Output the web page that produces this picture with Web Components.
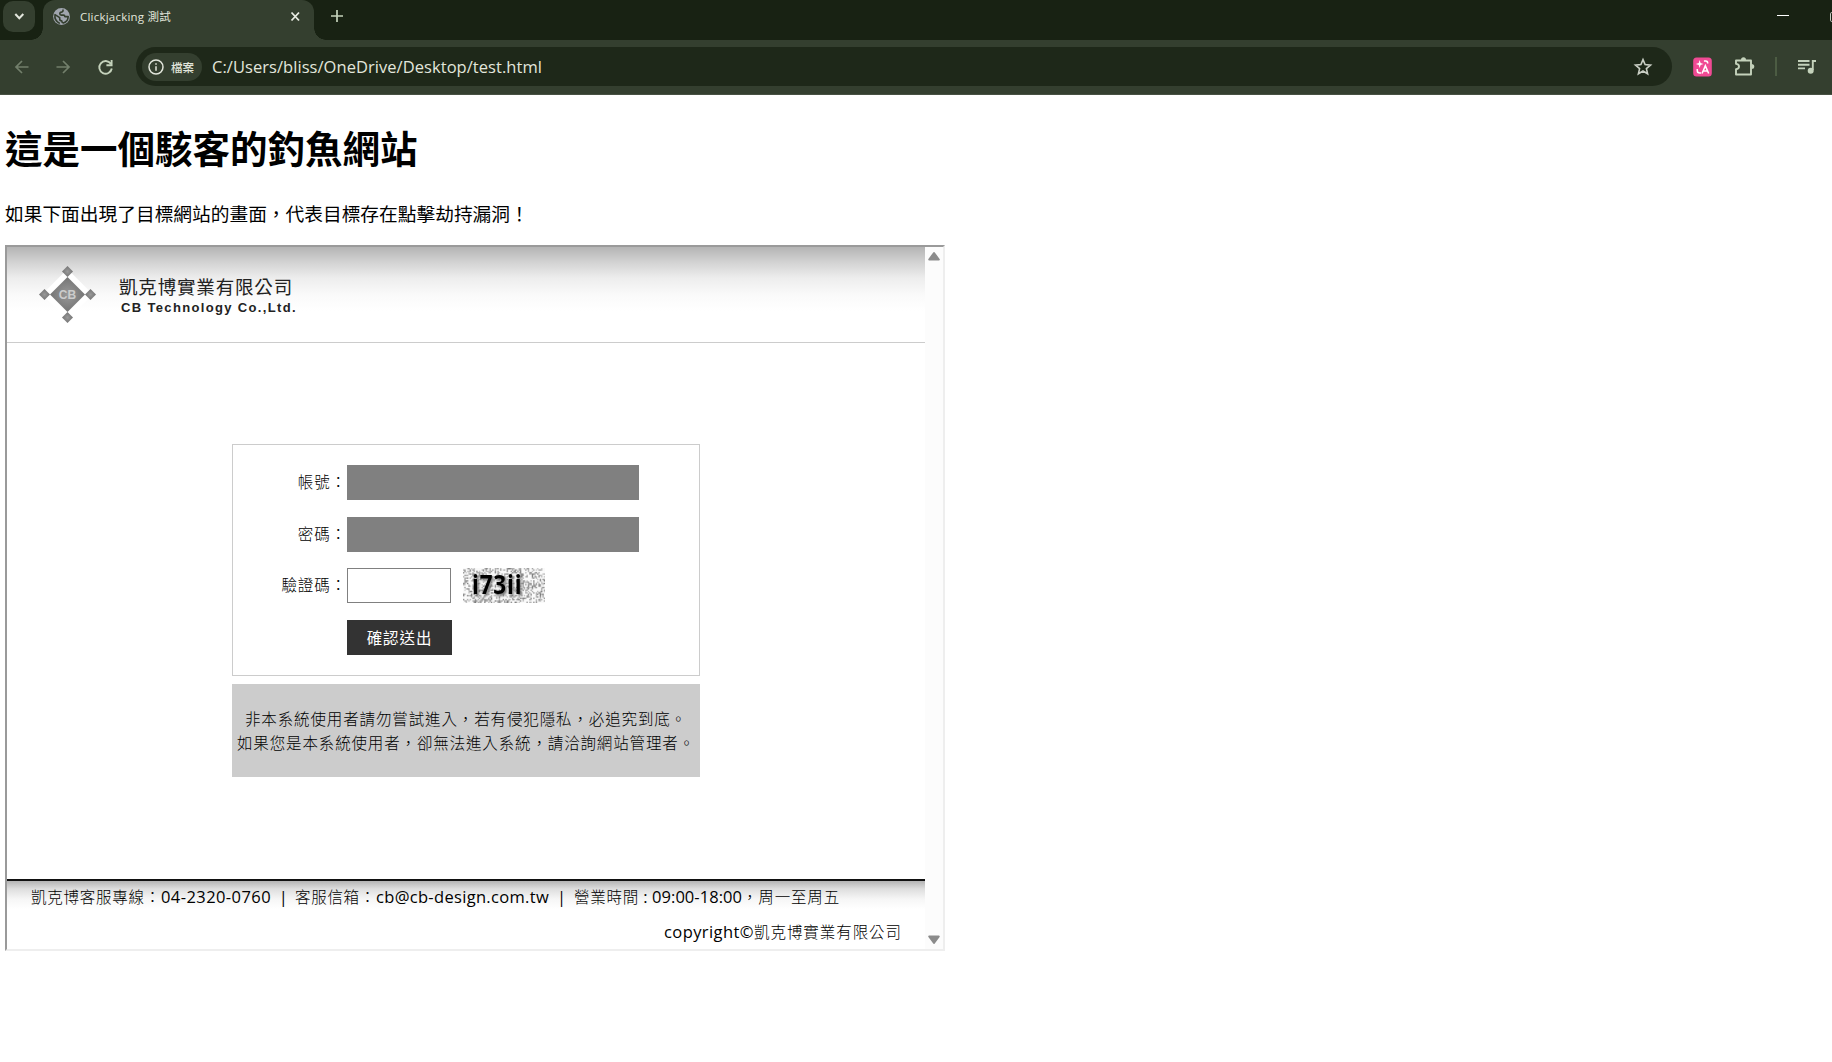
<!DOCTYPE html>
<html lang="zh-Hant">
<head>
<meta charset="utf-8">
<title>Clickjacking 測試</title>
<style>
  body {
    margin: 0;
    background: #fff;
    font-family: 'Open Sans', 'Noto Sans CJK TC', sans-serif;
    overflow: hidden;
  }
</style>
</head>
<body>
<tab-strip><fit-text width="91">Clickjacking 測試</fit-text></tab-strip>
<tool-bar><fit-text width="330">C:/Users/bliss/OneDrive/Desktop/test.html</fit-text></tool-bar>
<test-page>
  <frame-view>
    <site-header></site-header>
    <login-panel></login-panel>
    <site-footer></site-footer>
  </frame-view>
</test-page>

<script>
class BaseElement extends HTMLElement {
  connectedCallback() {
    if (this.shadowRoot) return
    const template = document.createElement('template')
    template.innerHTML = this.content()
    this.attachShadow({ mode: 'open' })
    this.shadowRoot.append(template.content.cloneNode(true))
    this.render()
  }

  render() {}
}

// one line of text, tracked so that it fills the given width
class FitText extends BaseElement {
  content() {
    return `
      <style>
        :host { display: block; flex: none; }
        span { display: inline-block; white-space: pre; vertical-align: top; }
      </style>
      <span><slot></slot></span>
    `
  }

  render() {
    const width = Number(this.getAttribute('width'))
    const span = this.shadowRoot.querySelector('span')
    const count = [...this.textContent].length
    const natural = span.getBoundingClientRect().width
    span.style.letterSpacing = (width - natural) / count + 'px'
    this.style.width = width + 'px'
  }
}

class TabStrip extends BaseElement {
  content() {
    return `
      <style>
        :host {
          display: flex;
          height: 40px;
          background: #182213;
          color: #e2e6dc;
          font-size: 11.500px;
          line-height: 32px;
        }
        .search {
          width: 32px;
          height: 31px;
          margin: 1px 0 0 3px;
          border-radius: 10px;
          background: #343f2f;
        }
        .tab {
          position: relative;
          display: flex;
          align-items: center;
          box-sizing: border-box;
          width: 271px;
          height: 40px;
          margin-left: 8px;
          padding: 0 12px 7px 10px;
          border-radius: 12px 12px 0 0;
          background: #343f2f;
        }
        .tab::before,
        .tab::after {
          content: '';
          position: absolute;
          bottom: 0;
          width: 12px;
          height: 12px;
        }
        .tab::before { left: -12px; background: radial-gradient(circle at 0 0, transparent 11.5px, #343f2f 12px); }
        .tab::after { right: -12px; background: radial-gradient(circle at 100% 0, transparent 11.5px, #343f2f 12px); }
        .globe { margin-right: 10px; }
        .close { margin-left: auto; }
        .plus { margin: 8px 0 0 15px; }
        .min { margin: 9px 40px 0 auto; }
        .max { margin-top: 9px; }
        svg { display: block; flex: none; }
      </style>
      <div class="search">
        <svg width="32" height="31" fill="none" stroke="#e2e6dc" stroke-width="2"><path d="M12.300 13l4 4.300 4-4.300"/></svg>
      </div>
      <div class="tab">
        <svg class="globe" width="17" height="17" viewBox="0 0 17 17">
          <circle cx="8.500" cy="8.500" r="8.400" fill="#a0a5ae"/>
          <path d="M10 1.500q.3 2.600-1.500 2.600-1.700 0-1.700 1.700 0 1.300 1.400 1.300h2.300q1.300 0 1.300 1.500h3.400q-.3 5-4.700 6.400-1.800-.4-1.800-2.300-2 0-2-1.800V9.700L2 6.600Q1 12.500 6.800 15.500" fill="none" stroke="#343f2f" stroke-width="1.600" stroke-linejoin="round"/>
        </svg>
        <slot></slot>
        <svg class="close" width="14" height="14" stroke="#e8ece3" stroke-width="1.800"><path d="M3.500 2.500l7.500 8M11 2.500l-7.500 8"/></svg>
      </div>
      <svg class="plus" width="16" height="16" stroke="#c4d2bb" stroke-width="1.700"><path d="M8 2v12M2 8h12"/></svg>
      <svg class="min" width="14" height="14" stroke="#fff"><path d="M1 6.500h12"/></svg>
      <svg class="max" width="2" height="14" fill="none" stroke="#c4c9c0"><path d="M4 3.500H1.800q-1.300 0-1.300 1.300v6.400q0 1.300 1.300 1.300H4"/></svg>
    `
  }
}

class ToolBar extends BaseElement {
  content() {
    return `
      <style>
        :host {
          display: flex;
          align-items: center;
          box-sizing: border-box;
          height: 55px;
          padding: 0 15px 1px 12px;
          background: #343f2f;
          border-bottom: 1px solid #485143;
          color: #e2e6dc;
        }
        svg { display: block; flex: none; }
        .back, .forward { margin-right: 21px; }
        .reload { margin-right: 20px; }
        .address {
          display: flex;
          flex: none;
          align-items: center;
          box-sizing: border-box;
          width: 1536px;
          height: 39px;
          padding: 0 19px 0 6px;
          border-radius: 20px;
          background: #1e2819;
          font-size: 16.500px;
        }
        .chip {
          display: flex;
          align-items: center;
          box-sizing: border-box;
          width: 60px;
          height: 28px;
          margin-right: 10px;
          padding-left: 6px;
          gap: 7px;
          border-radius: 14px;
          background: #343f2f;
          font-size: 11.500px;
          font-weight: 500;
        }
        .star { margin-left: auto; }
        .translate { margin-left: 21px; }
        .puzzle { margin-left: 22px; }
        .bar { width: 2px; height: 19px; margin: 0 21px 0 20px; background: #4c5c43; }
      </style>
      <svg class="back" width="20" height="20" fill="none" stroke="#727f6b" stroke-width="1.700"><path d="M16.500 10H4M10 4l-6 6 6 6"/></svg>
      <svg class="forward" width="20" height="20" fill="none" stroke="#727f6b" stroke-width="1.700"><path d="M3.500 10H16M10 4l6 6-6 6"/></svg>
      <svg class="reload" width="22" height="20" fill="none" stroke="#c4d2bb" stroke-width="1.900"><path d="M16.800 6.800A6.300 6.300 0 1 0 17.800 11.500M17.600 3v5.200h-5.200"/></svg>
      <div class="address">
        <div class="chip">
          <svg width="16" height="16" fill="none" stroke="#e2e6dc" stroke-width="1.500"><circle cx="8" cy="8" r="7"/><path d="M8 7.200v4.500M8 4.200v1.600"/></svg>
          <span>檔案</span>
        </div>
        <slot></slot>
        <svg class="star" width="20" height="20" fill="none" stroke="#c9cec4" stroke-width="1.600"><path d="M10 2.600l2.100 5 5.400.5-4.100 3.500 1.200 5.200-4.600-2.800-4.600 2.800 1.200-5.200L2.500 8.100l5.400-.5z"/></svg>
      </div>
      <svg class="translate" width="19" height="20" viewBox="0 0 20 20" preserveAspectRatio="none">
        <rect x=".2" y=".5" width="19.600" height="19" rx="3.500" fill="#f04a94"/>
        <path d="M7 3l1 3 3 1-3 1-1 3-1-3-3-1 3-1z" fill="#fff"/>
        <path d="M11.500 4h2q2 0 2 2.500M4.500 12v1.500q0 2.500 2.500 2.500h1.500M9.500 16.500L13 8.800l3.500 7.700M10.700 14h4.600" fill="none" stroke="#fff" stroke-width="1.600"/>
      </svg>
      <svg class="puzzle" width="21" height="21" viewBox="0 0 21 21">
        <path d="M17 8v-3.500H2v3.200q3 .3 3 2.800t-3 2.800v5.200h15V8" fill="none" stroke="#c4d2bb" stroke-width="1.900" stroke-linejoin="round"/>
        <path d="M7 4q0-2.800 2.500-2.800T12 4zM17.500 8q2.800 0 2.800 2.500t-2.800 2.500z" fill="#c4d2bb"/>
      </svg>
      <div class="bar"></div>
      <svg width="19" height="16" viewBox="0 0 19 16">
        <path d="M0 2h11.500M0 5.700h11.500M0 9.400h7M18 2h-3.200v9" fill="none" stroke="#c4d2bb" stroke-width="1.900"/>
        <circle cx="12.700" cy="11.800" r="3" fill="#c4d2bb"/>
      </svg>
    `
  }
}

class TestPage extends BaseElement {
  content() {
    return `
      <style>
        :host {
          display: block;
          padding: 26px 5px 0;
          color: #000;
          font-family: 'Noto Sans CJK TC', sans-serif;
        }
        h1 {
          margin: 0;
          font-size: 37.500px;
          line-height: 52px;
          font-weight: 700;
        }
        p {
          margin: 27px 0 19px;
          font-size: 18.720px;
          line-height: 26px;
        }
      </style>
      <h1>這是一個駭客的釣魚網站</h1>
      <p>如果下面出現了目標網站的畫面，代表目標存在點擊劫持漏洞！</p>
      <slot></slot>
    `
  }
}

class FrameView extends BaseElement {
  content() {
    return `
      <style>
        :host {
          display: flex;
          box-sizing: border-box;
          width: 940px;
          height: 706px;
          border: 2px solid;
          border-color: #9a9a9a #eee #eee #9a9a9a;
          font-size: 15.500px;
          font-weight: 300;
        }
        .page {
          display: flex;
          flex-direction: column;
          width: 918px;
        }
        .scroll {
          display: flex;
          flex-direction: column;
          justify-content: space-between;
          align-items: center;
          box-sizing: border-box;
          width: 18px;
          padding: 4px 0;
          background: #fcfcfc;
        }
      </style>
      <div class="page"><slot></slot></div>
      <div class="scroll">
        <svg width="14" height="10"><path d="M7 2L11.800 8.500H2.200z" fill="#8b8b8b" stroke="#8b8b8b" stroke-width="2" stroke-linejoin="round"/></svg>
        <svg width="14" height="10"><path d="M7 8L11.800 1.500H2.200z" fill="#8b8b8b" stroke="#8b8b8b" stroke-width="2" stroke-linejoin="round"/></svg>
      </div>
    `
  }
}

class SiteHeader extends BaseElement {
  content() {
    return `
      <style>
        :host {
          display: flex;
          box-sizing: border-box;
          height: 96px;
          padding: 18px 0 0 31px;
          border-bottom: 1px solid #ccc;
          background: linear-gradient(#b4b4b4, #d2d2d2 15px, #ededed 31px, #fafafa 48px, #fff 64px);
        }
        .name {
          display: flex;
          flex-direction: column;
          margin: 9px 0 0 22px;
          color: #222;
        }
        .zh { font: 400 18.500px/25px 'Noto Sans CJK TC', sans-serif; }
        .en { margin-left: 2px; font: 700 13px/18px 'Liberation Sans', sans-serif; }
      </style>
      <svg width="59" height="59" viewBox="0 0 59 59">
        <defs>
          <radialGradient id="g"><stop offset="0" stop-color="#999"/><stop offset="1" stop-color="#747474"/></radialGradient>
        </defs>
        <path d="M29.500 4L55 29.500 29.500 55 4 29.500z" fill="#fff"/>
        <g fill="url(#g)">
          <path d="M29.500 12l17.500 17.500-17.500 17.500L12 29.500z"/>
          <path d="M29.500 1l5.500 5.500-5.500 5.500L24 6.500z"/>
          <path d="M29.500 47l5.500 5.500-5.500 5.500-5.500-5.500z"/>
          <path d="M6.500 24l5.500 5.500L6.500 35 1 29.500z"/>
          <path d="M52.500 24l5.500 5.500-5.500 5.500-5.500-5.500z"/>
        </g>
        <text x="29.500" y="33.700" text-anchor="middle" font-family="Liberation Sans" font-size="12" font-weight="700" fill="#ccc">CB</text>
      </svg>
      <div class="name">
        <fit-text class="zh" width="174">凱克博實業有限公司</fit-text>
        <fit-text class="en" width="176">CB Technology Co.,Ltd.</fit-text>
      </div>
    `
  }
}

class CaptchaImage extends BaseElement {
  content() {
    return `
      <style>
        :host { position: relative; display: block; width: 82px; height: 35px; }
        canvas { display: block; width: 82px; height: 35px; }
        span {
          position: absolute;
          left: 9px;
          top: -1px;
          font: 700 27px/33px 'Open Sans', sans-serif;
          color: #000;
          white-space: pre;
          letter-spacing: 1px;
          transform: scaleX(.83);
          transform-origin: 0 0;
          text-shadow: 2px 2px 3px #777;
        }
      </style>
      <canvas width="62" height="26"></canvas>
      <span>i73ii</span>
    `
  }

  render() {
    const ctx = this.shadowRoot.querySelector('canvas').getContext('2d')
    let seed = 73
    for (let y = 0; y < 26; y++) {
      for (let x = 0; x < 62; x++) {
        seed = (seed * 1103515245 + 12345) % 2147483648
        const r = seed / 2147483648
        const v = r < 0.4 ? 120 + Math.round(r * 200) : 250
        ctx.fillStyle = `rgb(${v},${v},${v})`
        ctx.fillRect(x, y, 1, 1)
      }
    }
  }
}

class FormRow extends BaseElement {
  content() {
    return `
      <style>
        :host { display: flex; align-items: center; height: 35px; }
        .label {
          display: flex;
          justify-content: flex-end;
          width: 114px;
          padding-bottom: 3px;
          letter-spacing: .900px;
        }
      </style>
      <div class="label">${this.getAttribute('label') || ''}</div>
      <slot></slot>
    `
  }
}

class LoginPanel extends BaseElement {
  content() {
    return `
      <style>
        :host {
          display: flex;
          flex-direction: column;
          align-items: center;
          box-sizing: border-box;
          height: 536px;
          padding: 101px 0 0 0;
          font-family: 'Noto Sans CJK TC', sans-serif;
        }
        .form {
          display: flex;
          flex-direction: column;
          gap: 16.600px;
          box-sizing: border-box;
          width: 468px;
          height: 232px;
          padding-top: 20px;
          border: 1px solid #ccc;
        }
        .field { width: 292px; height: 35px; background: #808080; }
        .code {
          box-sizing: border-box;
          width: 104px;
          height: 35px;
          margin-right: 12px;
          border: 1px solid #808080;
        }
        .send {
          display: flex;
          align-items: center;
          justify-content: center;
          box-sizing: border-box;
          width: 105px;
          height: 35px;
          padding-bottom: 1px;
          background: #333;
          color: #fff;
          font-weight: 400;
          letter-spacing: .900px;
        }
        .note {
          display: flex;
          flex-direction: column;
          align-items: center;
          box-sizing: border-box;
          width: 468px;
          height: 93px;
          margin-top: 8px;
          padding-top: 22px;
          background: #ccc;
          line-height: 24px;
        }
      </style>
      <div class="form">
        <form-row label="帳號："><div class="field"></div></form-row>
        <form-row label="密碼："><div class="field"></div></form-row>
        <form-row label="驗證碼："><div class="code"></div><captcha-image></captcha-image></form-row>
        <form-row><div class="send">確認送出</div></form-row>
      </div>
      <div class="note">
        <fit-text width="442">非本系統使用者請勿嘗試進入，若有侵犯隱私，必追究到底。</fit-text>
        <fit-text width="458">如果您是本系統使用者，卻無法進入系統，請洽詢網站管理者。</fit-text>
      </div>
    `
  }
}

class SiteFooter extends BaseElement {
  content() {
    return `
      <style>
        :host {
          display: flex;
          flex-direction: column;
          box-sizing: border-box;
          height: 70px;
          padding: 0 23px 0 24px;
          border-top: 2px solid #111;
          background: linear-gradient(#b4b4b4, #dedede 8px, #f6f6f6 18px, #fff 28px);
          line-height: 31px;
        }
        .line { display: flex; height: 35px; }
        .right { justify-content: flex-end; line-height: 33px; }
        .en { font-size: 16.500px; font-family: 'Open Sans', sans-serif; font-weight: 400; }
      </style>
      <div class="line">
        <fit-text width="130">凱克博客服專線：</fit-text><fit-text class="en" width="110">04-2320-0760</fit-text><fit-text class="en" width="24">  |  </fit-text>
        <fit-text width="81">客服信箱：</fit-text><fit-text class="en" width="173">cb@cb-design.com.tw</fit-text><fit-text class="en" width="25">  |  </fit-text>
        <fit-text width="65">營業時間</fit-text><fit-text class="en" width="103"> : 09:00-18:00</fit-text><fit-text width="98">，周一至周五</fit-text>
      </div>
      <div class="line right">
        <fit-text class="en" width="90">copyright©</fit-text><fit-text width="148">凱克博實業有限公司</fit-text>
      </div>
    `
  }
}

// outer elements first: fit-text measures with the fonts they set
window.customElements.define('tab-strip', TabStrip)
window.customElements.define('tool-bar', ToolBar)
window.customElements.define('test-page', TestPage)
window.customElements.define('frame-view', FrameView)
window.customElements.define('site-header', SiteHeader)
window.customElements.define('login-panel', LoginPanel)
window.customElements.define('site-footer', SiteFooter)
window.customElements.define('form-row', FormRow)
window.customElements.define('captcha-image', CaptchaImage)
window.customElements.define('fit-text', FitText)
</script>
</body>
</html>
